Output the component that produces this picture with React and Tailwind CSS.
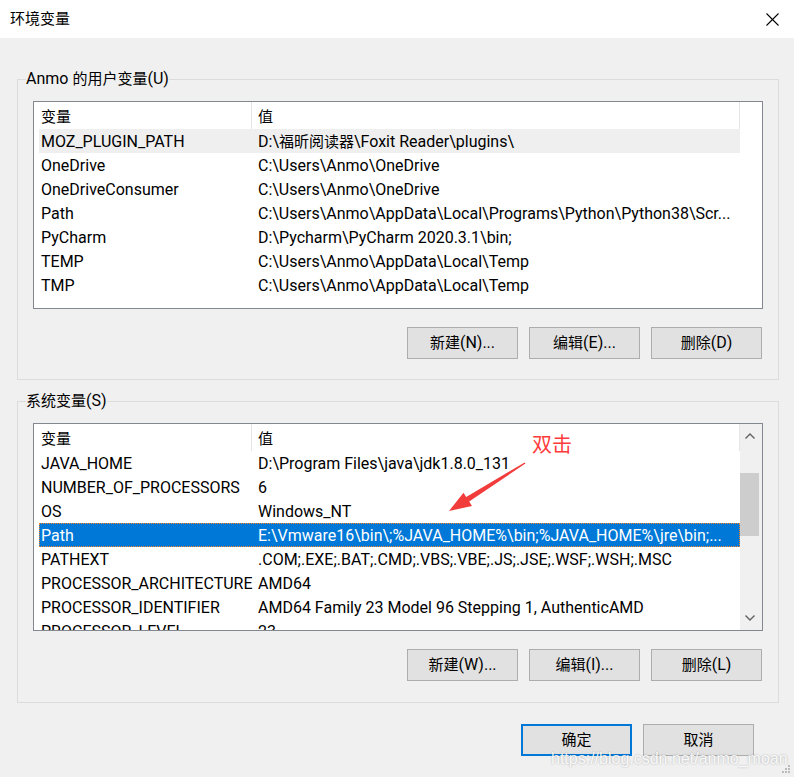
import React from "react";

const userRows = [
  ["MOZ_PLUGIN_PATH", "D:\\福昕阅读器\\Foxit Reader\\plugins\\"],
  ["OneDrive", "C:\\Users\\Anmo\\OneDrive"],
  ["OneDriveConsumer", "C:\\Users\\Anmo\\OneDrive"],
  ["Path", "C:\\Users\\Anmo\\AppData\\Local\\Programs\\Python\\Python38\\Scr..."],
  ["PyCharm", "D:\\Pycharm\\PyCharm 2020.3.1\\bin;"],
  ["TEMP", "C:\\Users\\Anmo\\AppData\\Local\\Temp"],
  ["TMP", "C:\\Users\\Anmo\\AppData\\Local\\Temp"],
];

const sysRows = [
  ["JAVA_HOME", "D:\\Program Files\\java\\jdk1.8.0_131"],
  ["NUMBER_OF_PROCESSORS", "6"],
  ["OS", "Windows_NT"],
  ["Path", "E:\\Vmware16\\bin\\;%JAVA_HOME%\\bin;%JAVA_HOME%\\jre\\bin;..."],
  ["PATHEXT", ".COM;.EXE;.BAT;.CMD;.VBS;.VBE;.JS;.JSE;.WSF;.WSH;.MSC"],
  ["PROCESSOR_ARCHITECTURE", "AMD64"],
  ["PROCESSOR_IDENTIFIER", "AMD64 Family 23 Model 96 Stepping 1, AuthenticAMD"],
  ["PROCESSOR_LEVEL", "23"],
];

// Latin text in Roboto 16px, CJK runs at 15px
function M({ children }) {
  const parts = String(children).split(/([\u4e00-\u9fff]+)/);
  return parts.map((p, i) =>
    /[\u4e00-\u9fff]/.test(p) ? (
      <span key={i} className="text-[15px]">
        {p}
      </span>
    ) : (
      <React.Fragment key={i}>{p}</React.Fragment>
    )
  );
}

function Chevron({ up }) {
  return (
    <svg width="10" height="6" viewBox="0 0 10 6">
      {up ? (
        <polyline points="0.5,5.5 5,1 9.5,5.5" fill="none" stroke="#606060" strokeWidth="1.4" />
      ) : (
        <polyline points="0.5,0.5 5,5 9.5,0.5" fill="none" stroke="#606060" strokeWidth="1.4" />
      )}
    </svg>
  );
}

function ListBox({ rows, highlight, selected, scrollbar }) {
  return (
    <div className="h-[208px] border border-[#828790] bg-white flex overflow-hidden">
      <div className="flex-1 min-w-0 flex flex-col overflow-hidden">
        <div className="h-[27px] shrink-0 flex">
          <div className="w-[218px] pl-[7px] pt-[3px] flex items-center border-r border-[#e5e5e5]">
            <M>变量</M>
          </div>
          <div className="w-[488px] pl-[6px] pt-[3px] flex items-center border-r border-[#e5e5e5]">
            <M>值</M>
          </div>
        </div>
        {rows.map(([name, value], i) => {
          const isSel = i === selected;
          const isHi = i === highlight;
          return (
            <div
              key={name + i}
              className={
                "ml-[5px] w-[701px] h-[24px] pt-[2px] shrink-0 flex items-center whitespace-nowrap " +
                (isSel
                  ? "bg-[#0078d7] text-white outline-1 outline-dotted outline-[#ff8728] -outline-offset-1"
                  : isHi
                  ? "bg-[#efefef]"
                  : "")
              }
            >
              <div className="w-[212px] shrink-0 pl-[2px]">{name}</div>
              <div className="flex-1 min-w-0 pl-[7px] overflow-hidden">
                <M>{value}</M>
              </div>
            </div>
          );
        })}
      </div>
      {scrollbar && (
        <div className="w-[22px] shrink-0 bg-[#f0f0f0] flex flex-col">
          <div className="h-[24px] flex items-center justify-center pr-[3px]">
            <Chevron up />
          </div>
          <div className="h-[25px]" />
          <div className="h-[63px] w-[19px] bg-[#cdcdcd]" />
          <div className="flex-1" />
          <div className="h-[24px] flex items-center justify-center pr-[3px]">
            <Chevron />
          </div>
        </div>
      )}
    </div>
  );
}

function Btn({ children, primary }) {
  return (
    <div
      className={
        "w-[111px] h-[32px] bg-[#e1e1e1] flex items-center justify-center whitespace-nowrap " +
        (primary ? "border-2 border-[#0078d7]" : "border border-[#adadad]")
      }
    >
      <M>{children}</M>
    </div>
  );
}

function Group({ title, rows, highlight, selected, scrollbar, buttons, className }) {
  return (
    <fieldset className={"border border-[#dcdcdc] px-[8px] " + className}>
      <legend className="leading-[18px] px-0">
        <M>{title}</M>
      </legend>
      <div className="px-[7px]">
        <div className="mt-[13px]">
          <ListBox rows={rows} highlight={highlight} selected={selected} scrollbar={scrollbar} />
        </div>
        <div className="mt-[18px] flex justify-end gap-[11px] pr-[1px]">
          {buttons.map((b) => (
            <Btn key={b}>{b}</Btn>
          ))}
        </div>
      </div>
    </fieldset>
  );
}

export default function App() {
  return (
    <div className="relative w-[794px] h-[777px] overflow-hidden bg-[#f0f0f0] text-black text-[16px] font-['Roboto','Noto_Sans_CJK_SC',sans-serif]">
      <div className="h-[38px] bg-white flex items-center justify-between pl-[10px] pr-[15px]">
        <span className="leading-none">
          <M>环境变量</M>
        </span>
        <svg width="13" height="13" viewBox="0 0 13 13">
          <line x1="0.5" y1="0.5" x2="12.5" y2="12.5" stroke="#000" strokeWidth="1.1" />
          <line x1="12.5" y1="0.5" x2="0.5" y2="12.5" stroke="#000" strokeWidth="1.1" />
        </svg>
      </div>

      <div className="pl-[17px] pr-[15px]">
        <Group
          className="mt-[32px] pb-[20px]"
          title="Anmo 的用户变量(U)"
          rows={userRows}
          highlight={0}
          buttons={["新建(N)...", "编辑(E)...", "删除(D)"]}
        />
        <Group
          className="mt-[12px] pb-[21px]"
          title="系统变量(S)"
          rows={sysRows}
          selected={3}
          scrollbar
          buttons={["新建(W)...", "编辑(I)...", "删除(L)"]}
        />
      </div>

      <div className="mt-[21px] flex justify-end gap-[11px] pr-[40px]">
        <Btn primary>确定</Btn>
        <Btn>取消</Btn>
      </div>

      {/* annotation */}
      <div className="absolute left-[532px] top-[432px] text-[20px] leading-[24px] text-[#ff3b3b] font-['Noto_Sans_CJK_SC',sans-serif]">
        双击
      </div>
      <svg className="absolute left-0 top-0" width="794" height="777" viewBox="0 0 794 777" pointerEvents="none">
        <polygon
          points="525.4,463.5 469.2,501.6 472,506 449,511 463.5,492.8 466.2,496.9 524.6,462.5"
          fill="#f23c3c"
        />
      </svg>

      {/* watermark */}
      <div className="absolute left-[551px] top-[749px] text-[16px] leading-[20px] text-[rgba(255,255,255,0.9)] font-['Liberation_Sans',sans-serif] [text-shadow:0_0_2px_rgba(0,0,0,0.3)]">
        https://blog.csdn.net/anmo_moan
      </div>

      {/* resize grip */}
      <svg className="absolute left-[782px] top-[765px]" width="9" height="9" viewBox="0 0 9 9">
        <rect x="6" y="0" width="2" height="2" fill="#bcbcbc" />
        <rect x="3" y="3" width="2" height="2" fill="#bcbcbc" />
        <rect x="6" y="3" width="2" height="2" fill="#bcbcbc" />
        <rect x="0" y="6" width="2" height="2" fill="#bcbcbc" />
        <rect x="3" y="6" width="2" height="2" fill="#bcbcbc" />
        <rect x="6" y="6" width="2" height="2" fill="#bcbcbc" />
      </svg>
    </div>
  );
}
